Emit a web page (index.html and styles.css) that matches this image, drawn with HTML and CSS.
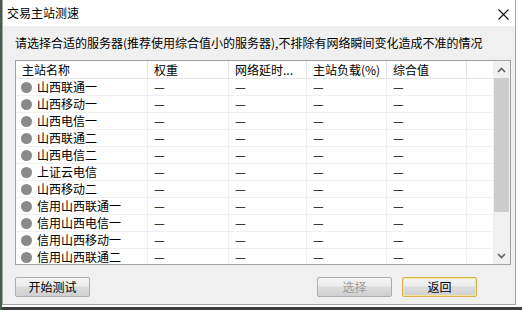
FILE: index.html
```html
<!DOCTYPE html>
<html lang="zh-CN">
<head>
<meta charset="utf-8">
<title>交易主站测速</title>
<link rel="stylesheet" href="styles.css">
</head>
<body>
<div class="screen">
  <div class="edge-left"></div>
  <div class="window">
    <div class="titlebar">
      <span class="title">交易主站测速</span>
      <span class="close"><svg width="11" height="11" viewBox="0 0 11 11"><path d="M0.5 0.5 L10.5 10.5 M10.5 0.5 L0.5 10.5" stroke="#111" stroke-width="1.1" fill="none"/></svg></span>
    </div>
    <div class="content">
      <p class="hint">请选择合适的服务器(推荐使用综合值小的服务器),不排除有网络瞬间变化造成不准的情况</p>
      <div class="list">
        <div class="list-main">
          <div class="grid head">
            <div class="c">主站名称</div>
            <div class="c">权重</div>
            <div class="c">网络延时...</div>
            <div class="c">主站负载(%)</div>
            <div class="c">综合值</div>
            <div class="c"></div>
          </div>
          <div class="rows">
            <div class="grid row"><div class="c name"><span class="dot"></span>山西联通一</div><div class="c">—</div><div class="c">—</div><div class="c">—</div><div class="c">—</div><div class="c"></div></div>
            <div class="grid row"><div class="c name"><span class="dot"></span>山西移动一</div><div class="c">—</div><div class="c">—</div><div class="c">—</div><div class="c">—</div><div class="c"></div></div>
            <div class="grid row"><div class="c name"><span class="dot"></span>山西电信一</div><div class="c">—</div><div class="c">—</div><div class="c">—</div><div class="c">—</div><div class="c"></div></div>
            <div class="grid row"><div class="c name"><span class="dot"></span>山西联通二</div><div class="c">—</div><div class="c">—</div><div class="c">—</div><div class="c">—</div><div class="c"></div></div>
            <div class="grid row"><div class="c name"><span class="dot"></span>山西电信二</div><div class="c">—</div><div class="c">—</div><div class="c">—</div><div class="c">—</div><div class="c"></div></div>
            <div class="grid row"><div class="c name"><span class="dot"></span>上证云电信</div><div class="c">—</div><div class="c">—</div><div class="c">—</div><div class="c">—</div><div class="c"></div></div>
            <div class="grid row"><div class="c name"><span class="dot"></span>山西移动二</div><div class="c">—</div><div class="c">—</div><div class="c">—</div><div class="c">—</div><div class="c"></div></div>
            <div class="grid row"><div class="c name"><span class="dot"></span>信用山西联通一</div><div class="c">—</div><div class="c">—</div><div class="c">—</div><div class="c">—</div><div class="c"></div></div>
            <div class="grid row"><div class="c name"><span class="dot"></span>信用山西电信一</div><div class="c">—</div><div class="c">—</div><div class="c">—</div><div class="c">—</div><div class="c"></div></div>
            <div class="grid row"><div class="c name"><span class="dot"></span>信用山西移动一</div><div class="c">—</div><div class="c">—</div><div class="c">—</div><div class="c">—</div><div class="c"></div></div>
            <div class="grid row"><div class="c name"><span class="dot"></span>信用山西联通二</div><div class="c">—</div><div class="c">—</div><div class="c">—</div><div class="c">—</div><div class="c"></div></div>
          </div>
        </div>
        <div class="vscroll">
          <div class="arrow"><svg width="9" height="6" viewBox="0 0 9 6"><path d="M1 5 L4.5 1.5 L8 5" stroke="#606060" stroke-width="1.6" fill="none"/></svg></div>
          <div class="thumb"></div>
          <div class="track"></div>
          <div class="arrow"><svg width="9" height="6" viewBox="0 0 9 6"><path d="M1 1 L4.5 4.5 L8 1" stroke="#606060" stroke-width="1.6" fill="none"/></svg></div>
        </div>
      </div>
      <div class="buttons">
        <button class="btn">开始测试</button>
        <span class="spacer"></span>
        <button class="btn disabled">选择</button>
        <button class="btn default">返回</button>
      </div>
    </div>
  </div>
</div>
</body>
</html>
```

FILE: styles.css
```css
* { box-sizing: border-box; }
html, body {
  margin: 0;
  padding: 0;
  width: 522px;
  height: 310px;
  overflow: hidden;
  background: #ffffff;
  font-family: "Noto Sans CJK SC", "Liberation Sans", sans-serif;
  font-size: 12px;
  color: #000;
}
.screen {
  display: flex;
  align-items: flex-start;
  height: 310px;
  border-bottom: 3px solid #3c3c3c;
}
.edge-left {
  width: 2px;
  height: 310px;
  background: #4b5b4c;
}
.window {
  width: 514px;
  height: 305px;
  border: 1px solid #a3a3a3;
  border-top: none;
  background: #f0f0f0;
  display: flex;
  flex-direction: column;
}
.titlebar {
  height: 26px;
  background: #ffffff;
  display: flex;
  align-items: center;
  padding-left: 4px;
  padding-right: 6px;
}
.title {
  flex: 1;
  line-height: 16px;
}
.close {
  width: 11px;
  height: 11px;
  display: flex;
  margin-right: 0;
  margin-top: 2px;
}
.close svg { display: block; }
.content {
  padding: 0 0 0 12px;
}
.hint {
  margin: 9px 0 0 0;
  line-height: 16px;
  height: 16px;
  white-space: nowrap;
}
.list {
  margin-top: 9px;
  width: 496px;
  height: 205px;
  border: 1px solid #a0a0a0;
  background: #ffffff;
  display: flex;
  overflow: hidden;
}
.list-main {
  width: 477px;
  overflow: hidden;
}
.grid {
  display: grid;
  grid-template-columns: 132px 81px 78px 80px 80px 26px;
}
.head {
  height: 18px;
  border-bottom: 1px solid #e5e5e5;
}
.head .c {
  border-right: 1px solid #e5e5e5;
  padding-left: 6px;
  line-height: 17px;
  white-space: nowrap;
  overflow: hidden;
}
.head .c:last-child { border-right: none; }
.row {
  height: 17px;
  border-bottom: 1px solid #f0f0f0;
}
.row .c {
  border-right: 1px solid #f0f0f0;
  padding-left: 6px;
  line-height: 16px;
  white-space: nowrap;
  display: flex;
  align-items: center;
}
.row .c:last-child { border-right: none; }
.row .name { padding-left: 5px; }
.dot {
  width: 11px;
  height: 11px;
  border-radius: 50%;
  background: #8a8a8a;
  margin-right: 5px;
  flex: none;
}
.vscroll {
  width: 17px;
  background: #f0f0f0;
  display: flex;
  flex-direction: column;
}
.arrow {
  height: 17px;
  display: flex;
  align-items: center;
  justify-content: center;
  flex: none;
}
.arrow svg { display: block; }
.thumb {
  height: 134px;
  margin: 0 1px;
  background: #cdcdcd;
  flex: none;
}
.track { flex: 1; }
.buttons {
  display: flex;
  margin-top: 12px;
  width: 462px;
}
.spacer { flex: 1; }
.btn {
  width: 75px;
  height: 20px;
  padding: 0;
  font-family: inherit;
  font-size: 12px;
  color: #000;
  border: 1px solid #adadad;
  border-radius: 2px;
  background: linear-gradient(#f4f4f4 0%, #ececec 45%, #dddddd 50%, #cfcfcf 100%);
  line-height: 18px;
}
.btn.disabled {
  color: #9c9c9c;
}
.btn.default {
  margin-left: 10px;
  border-color: #d8b24a;
  box-shadow: inset 0 0 0 1px #f6e39a;
}
```
